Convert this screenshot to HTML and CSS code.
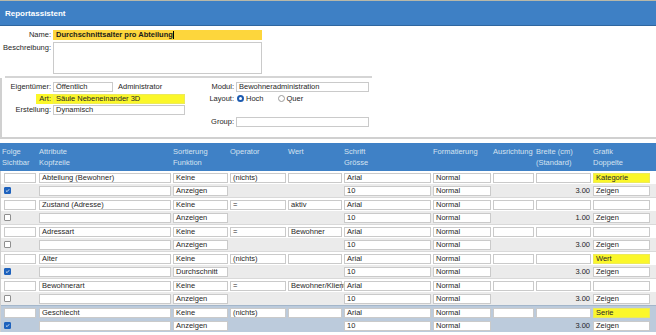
FILE: index.html
```html
<!DOCTYPE HTML>
<html>
<head>
	<title>Reportassistent</title>
	<link rel="stylesheet" href="styles.css">
</head>
<body>
	<div class="topbar">Reportassistent</div>

	<div class="sec1">
		<div class="frow">
			<label class="lbl">Name:</label>
			<div class="fld fld-name"><b>Durchschnittsalter pro Abteilung</b><span class="caret"></span></div>
		</div>
		<div class="frow frow-area">
			<label class="lbl lbl-top">Beschreibung:</label>
			<div class="fld fld-area"></div>
		</div>
		<div class="sep"></div>
	</div>

	<div class="box">
		<div class="bgrid">
			<label class="lbl">Eigentümer:</label>
			<div class="inl"><div class="fld w60">Öffentlich</div><span class="plain">Administrator</span></div>
			<label class="lbl">Modul:</label>
			<div class="fld">Bewohneradministration</div>

			<label class="lbl lbl-hl"><span>Art:</span></label>
			<div class="fld fld-yellow w132">Säule Nebeneinander 3D</div>
			<label class="lbl">Layout:</label>
			<div class="radios">
				<span class="radio on"></span><span class="rtxt">Hoch</span>
				<span class="radio"></span><span class="rtxt">Quer</span>
			</div>

			<label class="lbl">Erstellung:</label>
			<div class="fld w132">Dynamisch</div>
			<span></span><span></span>

			<span></span><span></span>
			<label class="lbl">Group:</label>
			<div class="fld"></div>
		</div>
	</div>

	<div class="thead">
		<div>Folge<br>Sichtbar</div>
		<div>Attribute<br>Kopfzeile</div>
		<div>Sortierung<br>Funktion</div>
		<div>Operator</div>
		<div>Wert</div>
		<div>Schrift<br>Grösse</div>
		<div>Formatierung</div>
		<div>Ausrichtung</div>
		<div>Breite (cm)<br>(Standard)</div>
		<div>Grafik<br>Doppelte</div>
		<div></div>
	</div>

	<div class="tbody">
		<div class="rec">
			<div class="line l1">
				<div class="c first"><div class="fld"></div></div>
				<div class="c"><div class="fld">Abteilung (Bewohner)</div></div>
				<div class="c"><div class="fld">Keine</div></div>
				<div class="c"><div class="fld">(nichts)</div></div>
				<div class="c"><div class="fld"></div></div>
				<div class="c"><div class="fld">Arial</div></div>
				<div class="c"><div class="fld">Normal</div></div>
				<div class="c"><div class="fld"></div></div>
				<div class="c"><div class="fld"></div></div>
				<div class="c"><div class="fld fld-yellow">Kategorie</div></div>
			</div>
			<div class="line l2">
				<div class="c first"><span class="chk on"></span></div>
				<div class="c"><div class="fld"></div></div>
				<div class="c"><div class="fld">Anzeigen</div></div>
				<div class="c"></div>
				<div class="c"></div>
				<div class="c"><div class="fld">10</div></div>
				<div class="c"><div class="fld">Normal</div></div>
				<div class="c"></div>
				<div class="c num">3.00</div>
				<div class="c"><div class="fld">Zeigen</div></div>
			</div>
		</div>

		<div class="rec">
			<div class="line l1">
				<div class="c first"><div class="fld"></div></div>
				<div class="c"><div class="fld">Zustand (Adresse)</div></div>
				<div class="c"><div class="fld">Keine</div></div>
				<div class="c"><div class="fld">=</div></div>
				<div class="c"><div class="fld">aktiv</div></div>
				<div class="c"><div class="fld">Arial</div></div>
				<div class="c"><div class="fld">Normal</div></div>
				<div class="c"><div class="fld"></div></div>
				<div class="c"><div class="fld"></div></div>
				<div class="c"><div class="fld"></div></div>
			</div>
			<div class="line l2">
				<div class="c first"><span class="chk"></span></div>
				<div class="c"><div class="fld"></div></div>
				<div class="c"><div class="fld">Anzeigen</div></div>
				<div class="c"></div>
				<div class="c"></div>
				<div class="c"><div class="fld">10</div></div>
				<div class="c"><div class="fld">Normal</div></div>
				<div class="c"></div>
				<div class="c num">1.00</div>
				<div class="c"><div class="fld">Zeigen</div></div>
			</div>
		</div>

		<div class="rec">
			<div class="line l1">
				<div class="c first"><div class="fld"></div></div>
				<div class="c"><div class="fld">Adressart</div></div>
				<div class="c"><div class="fld">Keine</div></div>
				<div class="c"><div class="fld">=</div></div>
				<div class="c"><div class="fld">Bewohner</div></div>
				<div class="c"><div class="fld">Arial</div></div>
				<div class="c"><div class="fld">Normal</div></div>
				<div class="c"><div class="fld"></div></div>
				<div class="c"><div class="fld"></div></div>
				<div class="c"><div class="fld"></div></div>
			</div>
			<div class="line l2">
				<div class="c first"><span class="chk"></span></div>
				<div class="c"><div class="fld"></div></div>
				<div class="c"><div class="fld">Anzeigen</div></div>
				<div class="c"></div>
				<div class="c"></div>
				<div class="c"><div class="fld">10</div></div>
				<div class="c"><div class="fld">Normal</div></div>
				<div class="c"></div>
				<div class="c num">3.00</div>
				<div class="c"><div class="fld">Zeigen</div></div>
			</div>
		</div>

		<div class="rec">
			<div class="line l1">
				<div class="c first"><div class="fld"></div></div>
				<div class="c"><div class="fld">Alter</div></div>
				<div class="c"><div class="fld">Keine</div></div>
				<div class="c"><div class="fld">(nichts)</div></div>
				<div class="c"><div class="fld"></div></div>
				<div class="c"><div class="fld">Arial</div></div>
				<div class="c"><div class="fld">Normal</div></div>
				<div class="c"><div class="fld"></div></div>
				<div class="c"><div class="fld"></div></div>
				<div class="c"><div class="fld fld-yellow">Wert</div></div>
			</div>
			<div class="line l2">
				<div class="c first"><span class="chk on"></span></div>
				<div class="c"><div class="fld"></div></div>
				<div class="c"><div class="fld">Durchschnitt</div></div>
				<div class="c"></div>
				<div class="c"></div>
				<div class="c"><div class="fld">10</div></div>
				<div class="c"><div class="fld">Normal</div></div>
				<div class="c"></div>
				<div class="c num">3.00</div>
				<div class="c"><div class="fld">Zeigen</div></div>
			</div>
		</div>

		<div class="rec">
			<div class="line l1">
				<div class="c first"><div class="fld"></div></div>
				<div class="c"><div class="fld">Bewohnerart</div></div>
				<div class="c"><div class="fld">Keine</div></div>
				<div class="c"><div class="fld">=</div></div>
				<div class="c"><div class="fld fld-over">Bewohner/Klient</div></div>
				<div class="c"><div class="fld">Arial</div></div>
				<div class="c"><div class="fld">Normal</div></div>
				<div class="c"><div class="fld"></div></div>
				<div class="c"><div class="fld"></div></div>
				<div class="c"><div class="fld"></div></div>
			</div>
			<div class="line l2">
				<div class="c first"><span class="chk"></span></div>
				<div class="c"><div class="fld"></div></div>
				<div class="c"><div class="fld">Anzeigen</div></div>
				<div class="c"></div>
				<div class="c"></div>
				<div class="c"><div class="fld">10</div></div>
				<div class="c"><div class="fld">Normal</div></div>
				<div class="c"></div>
				<div class="c num">3.00</div>
				<div class="c"><div class="fld">Zeigen</div></div>
			</div>
		</div>

		<div class="rec rec-sel">
			<div class="line l1">
				<div class="c first"><div class="fld"></div></div>
				<div class="c"><div class="fld">Geschlecht</div></div>
				<div class="c"><div class="fld">Keine</div></div>
				<div class="c"><div class="fld">(nichts)</div></div>
				<div class="c"><div class="fld"></div></div>
				<div class="c"><div class="fld">Arial</div></div>
				<div class="c"><div class="fld">Normal</div></div>
				<div class="c"><div class="fld"></div></div>
				<div class="c"><div class="fld"></div></div>
				<div class="c"><div class="fld fld-yellow">Serie</div></div>
			</div>
			<div class="line l2">
				<div class="c first"><span class="chk on"></span></div>
				<div class="c"><div class="fld"></div></div>
				<div class="c"><div class="fld">Anzeigen</div></div>
				<div class="c"></div>
				<div class="c"></div>
				<div class="c"><div class="fld">10</div></div>
				<div class="c"><div class="fld">Normal</div></div>
				<div class="c"></div>
				<div class="c num">3.00</div>
				<div class="c"><div class="fld">Zeigen</div></div>
			</div>
		</div>
	</div>
</body>
</html>
```

FILE: styles.css
```css
*, *::after, *::before{
	box-sizing: border-box;
	margin: 0;
	padding: 0;
}
html, body{
	width: 100%;
	height: 100%;
}
body{
	font: 7.5px "Liberation Sans", Arial, sans-serif;
	color: #262626;
	background: #fff;
	overflow: hidden;
}

/* titelleiste */
.topbar{
	height: 26px;
	border-top: 1px solid #b8b8a8;
	border-bottom: 1px solid #2f669f;
	background-color: #3e80c5;
	color: #fff;
	font-size: 8px;
	font-weight: bold;
	display: flex;
	align-items: center;
	padding-left: 5px;
}

/* felder */
.fld{
	height: 10px;
	border: 1px solid #cacaca;
	background-color: #fff;
	line-height: 8px;
	padding: 0 2px;
	white-space: nowrap;
	overflow: hidden;
}
.fld-name{
	background-color: #fdd63c;
	border-color: #fdd63c;
	display: flex;
	align-items: center;
}
.fld-name b{ font-weight: bold; color: #1a1a1a; }
.caret{
	display: inline-block;
	width: 1px;
	height: 8px;
	background: #000;
}
.fld-yellow{
	background-color: #fbf72a;
	border-color: #ecea5a;
}
.fld-area{ height: 32px; }
.w60{ width: 60px; }
.w132{ width: 132px; }
.lbl{
	text-align: right;
	line-height: 10px;
	white-space: nowrap;
}
.lbl-top{ line-height: 12px; }

/* oberer bereich */
.sec1{ padding-top: 4px; }
.frow{
	display: grid;
	grid-template-columns: 51px 209px;
	column-gap: 2px;
	margin-bottom: 2px;
}
.sep{
	margin: 1px 0 0 5px;
	width: 367px;
	border-top: 2px solid #d5d5d5;
}

.box{
	height: 61px;
	border-left: 2px solid #d0d0d0;
	border-bottom: 2px solid #d0d0d0;
	padding-top: 4px;
	margin-bottom: 4px;
}
.bgrid{
	display: grid;
	grid-template-columns: 49px 147px 32px 133px;
	grid-auto-rows: 10px;
	column-gap: 2px;
	row-gap: 1.5px;
}
.lbl-hl{ margin-right: -2px; }
.lbl-hl span{
	background-color: #fbf72a;
	padding: 0 2px 0 3px;
	display: inline-block;
	height: 10px;
}
.inl{
	display: flex;
	align-items: center;
	gap: 5px;
}
.plain{ line-height: 10px; }
.radios{
	display: flex;
	align-items: center;
	padding-left: 1px;
}
.radio{
	width: 7px;
	height: 7px;
	border-radius: 50%;
	border: 1px solid #9a9a9a;
	background: #fff;
}
.radio.on{
	border: 2px solid #1d5bb0;
}
.rtxt{ margin: 0 14px 0 2px; }

/* tabelle */
.thead, .line{
	display: grid;
	grid-template-columns: 37px 134px 57px 58px 56px 89px 60px 43px 57px 59px 1fr;
}
.thead{
	height: 28px;
	background-color: #3f81c6;
	color: #d5e2f0;
	padding-top: 3px;
	line-height: 11px;
}
.thead div{ padding-left: 2px; white-space: nowrap; }

.tbody{ border-left: 1px solid #cfcfcf; }
.rec{ border-bottom: 1px solid #d9d9d9; }
.line{
	height: 13px;
	align-items: center;
}
.l1{ background-color: #fff; }
.l2{ background-color: #ebebeb; }
.rec-sel{ border-top: 1px solid #a3b6ca; margin-top: -1px; border-bottom: none; }
.rec-sel .l1, .rec-sel .l2{ background-color: #bccbdc; }
.c{ padding: 0 1px; }
.c.first{ padding: 0 2px 0 3px; }
.num{
	text-align: right;
	padding-right: 2px;
}
.fld-over{ overflow: visible; }

.chk{
	display: block;
	width: 7px;
	height: 7px;
	border: 1px solid #8f8f8f;
	background: #fff;
	border-radius: 1px;
}
.chk.on{
	border-color: #1e62bd;
	background: #1e62bd url("data:image/svg+xml,%3Csvg xmlns='http://www.w3.org/2000/svg' viewBox='0 0 7 7'%3E%3Cpath d='M1.3 3.6 L2.9 5.1 L5.8 1.8' fill='none' stroke='white' stroke-width='1.1'/%3E%3C/svg%3E") center/100% no-repeat;
}
```
